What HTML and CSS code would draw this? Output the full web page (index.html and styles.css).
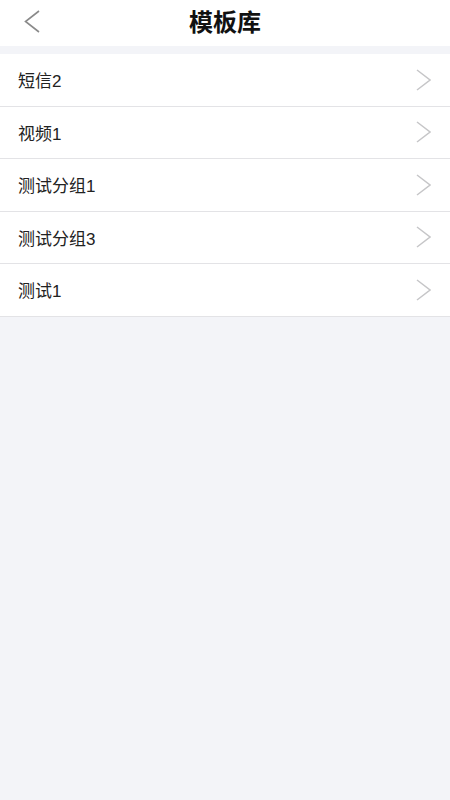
FILE: index.html
```html
<!DOCTYPE html>
<html lang="zh">
<head>
<meta charset="utf-8">
<link rel="stylesheet" href="styles.css">
</head>
<body>
<header class="nav">
  <svg class="back" width="16" height="23" viewBox="0 0 16 23"><path d="M15 1 L1.5 11.5 L15 22" fill="none" stroke="#8a8a8a" stroke-width="1.6"/></svg>
  <h1 class="title">模板库</h1>
</header>
<ul class="list">
  <li class="row"><span>短信2</span><svg class="chev" width="15" height="22" viewBox="0 0 15 22"><path d="M1 1 L14 11 L1 21" fill="none" stroke="#c6c6c8" stroke-width="1.5"/></svg></li>
  <li class="row"><span>视频1</span><svg class="chev" width="15" height="22" viewBox="0 0 15 22"><path d="M1 1 L14 11 L1 21" fill="none" stroke="#c6c6c8" stroke-width="1.5"/></svg></li>
  <li class="row"><span>测试分组1</span><svg class="chev" width="15" height="22" viewBox="0 0 15 22"><path d="M1 1 L14 11 L1 21" fill="none" stroke="#c6c6c8" stroke-width="1.5"/></svg></li>
  <li class="row"><span>测试分组3</span><svg class="chev" width="15" height="22" viewBox="0 0 15 22"><path d="M1 1 L14 11 L1 21" fill="none" stroke="#c6c6c8" stroke-width="1.5"/></svg></li>
  <li class="row"><span>测试1</span><svg class="chev" width="15" height="22" viewBox="0 0 15 22"><path d="M1 1 L14 11 L1 21" fill="none" stroke="#c6c6c8" stroke-width="1.5"/></svg></li>
</ul>
</body>
</html>
```

FILE: styles.css
```css
html, body {
  margin: 0;
  padding: 0;
  background: #f3f4f8;
  font-family: "Liberation Sans", "Noto Sans CJK SC", sans-serif;
  height: 100%;
}
.nav {
  height: 46px;
  background: #ffffff;
  display: flex;
  align-items: center;
  justify-content: center;
  position: relative;
  margin-bottom: 8px;
}
.back {
  position: absolute;
  left: 24px;
  top: 10px;
}
.title {
  margin: 0;
  font-size: 24px;
  font-weight: 700;
  color: #111;
  line-height: 1;
}
.list {
  list-style: none;
  margin: 0;
  padding: 0;
  background: #fff;
}
.row {
  height: 51.5px;
  border-bottom: 1px solid #e3e3e6;
  display: flex;
  align-items: center;
  justify-content: space-between;
  padding: 0 19px 0 18px;
  font-size: 17px;
  color: #222;
}
```
